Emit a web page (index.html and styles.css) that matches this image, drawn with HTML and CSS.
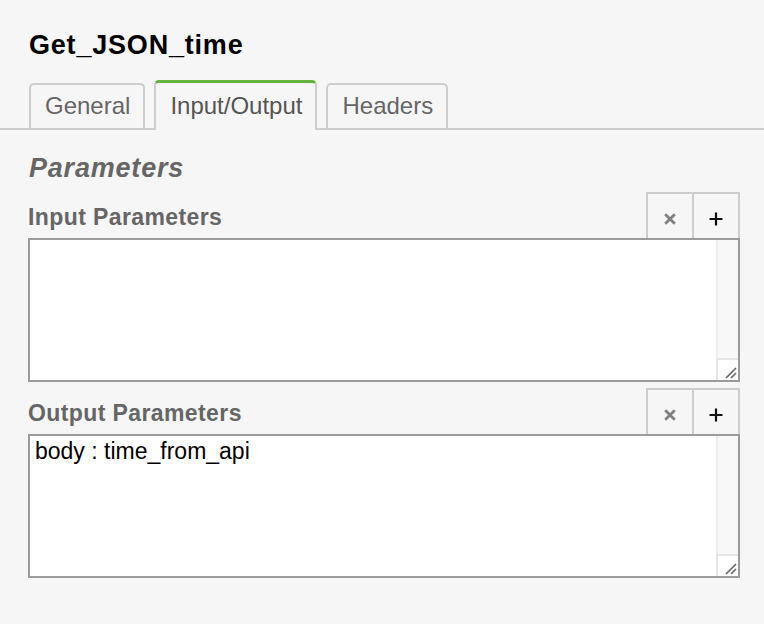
FILE: index.html
```html
<!DOCTYPE html>
<html>
<head>
<meta charset="utf-8">
<link rel="stylesheet" href="styles.css">
</head>
<body>
<div class="panel">
  <h1 class="title">Get_JSON_time</h1>
  <div class="tabs">
    <div class="tab">General</div>
    <div class="tab active">Input/Output</div>
    <div class="tab">Headers</div>
  </div>
  <div class="content">
    <h2 class="group-title">Parameters</h2>

    <div class="param">
      <div class="param-head">
        <label class="param-label">Input Parameters</label>
        <div class="btns">
          <button class="btn btn-clear" aria-label="clear">
            <svg width="12" height="12" viewBox="0 0 12 12"><path d="M1.2 1.2L10.8 10.8M10.8 1.2L1.2 10.8" stroke="#808080" stroke-width="2.8" fill="none"/></svg>
          </button>
          <button class="btn btn-add" aria-label="add">
            <svg width="14" height="14" viewBox="0 0 14 14"><path d="M7 0.5V13.5M0.5 7H13.5" stroke="#111" stroke-width="2.2" fill="none"/></svg>
          </button>
        </div>
      </div>
      <div class="field">
        <textarea class="area"></textarea>
        <div class="scroll">
          <div class="track"></div>
          <div class="corner">
            <svg width="20" height="20" viewBox="0 0 20 20"><path d="M8 18L18 8M13 18L18 13" stroke="#666" stroke-width="1.6" fill="none"/></svg>
          </div>
        </div>
      </div>
    </div>

    <div class="param">
      <div class="param-head">
        <label class="param-label">Output Parameters</label>
        <div class="btns">
          <button class="btn btn-clear" aria-label="clear">
            <svg width="12" height="12" viewBox="0 0 12 12"><path d="M1.2 1.2L10.8 10.8M10.8 1.2L1.2 10.8" stroke="#808080" stroke-width="2.8" fill="none"/></svg>
          </button>
          <button class="btn btn-add" aria-label="add">
            <svg width="14" height="14" viewBox="0 0 14 14"><path d="M7 0.5V13.5M0.5 7H13.5" stroke="#111" stroke-width="2.2" fill="none"/></svg>
          </button>
        </div>
      </div>
      <div class="field">
        <textarea class="area">body : time_from_api</textarea>
        <div class="scroll">
          <div class="track"></div>
          <div class="corner">
            <svg width="20" height="20" viewBox="0 0 20 20"><path d="M8 18L18 8M13 18L18 13" stroke="#666" stroke-width="1.6" fill="none"/></svg>
          </div>
        </div>
      </div>
    </div>
  </div>
</div>
</body>
</html>
```
FILE: styles.css
```css
html, body {
  margin: 0;
  padding: 0;
  background: #f6f6f6;
}
body {
  font-family: "Liberation Sans", Arial, sans-serif;
  color: #000;
  width: 764px;
  height: 624px;
  overflow: hidden;
}
.title {
  margin: 0;
  padding: 30px 0 0 29px;
  height: 50px;
  font-size: 27px;
  line-height: 30px;
  font-weight: bold;
  letter-spacing: 0.8px;
  color: #000;
}
.tabs {
  display: flex;
  align-items: flex-end;
  gap: 9px;
  padding-left: 29px;
  border-bottom: 2px solid #cdcdcd;
  height: 48px;
}
.tab {
  border: 2px solid #cdcdcd;
  border-bottom: 0;
  border-radius: 5px 5px 0 0;
  padding: 1px 13px 2px 14px;
  font-size: 24px;
  line-height: 40px;
  color: #666;
  background: #f6f6f6;
}
.tab.active {
  border-top: 3px solid #62b23b;
  padding-top: 3px;
  padding-bottom: 4px;
  margin-bottom: -2px;
  color: #555;
}
.content {
  padding: 23px 24px 0 28px;
}
.group-title {
  margin: 0 0 9px 1px;
  font-size: 27px;
  line-height: 30px;
  font-weight: bold;
  font-style: italic;
  letter-spacing: 0.8px;
  color: #666;
}
.param {
  margin-bottom: 6px;
}
.param-head {
  display: flex;
  justify-content: space-between;
  align-items: flex-start;
  height: 46px;
}
.param-label {
  font-size: 23px;
  font-weight: bold;
  letter-spacing: 0.4px;
  line-height: 42px;
  padding-top: 4px;
  color: #666;
}
.btns {
  display: flex;
}
.btn {
  box-sizing: border-box;
  width: 46px;
  height: 46px;
  margin: 0;
  padding: 5px 0 0;
  border: 2px solid #cdcdcd;
  border-right: 0;
  border-bottom: 0;
  background: #f6f6f6;
  display: flex;
  align-items: center;
  justify-content: center;
}
.btn-add {
  width: 48px;
  border-right: 2px solid #cdcdcd;
}
.field {
  display: flex;
  height: 140px;
  border: 2px solid #9b9b9b;
  background: #fff;
}
.area {
  flex: 1;
  margin: 0;
  border: 0;
  outline: 0;
  resize: none;
  overflow: hidden;
  padding: 1px 5px;
  font-family: "Liberation Sans", Arial, sans-serif;
  font-size: 23px;
  line-height: 28px;
  color: #000;
  background: #fff;
}
.scroll {
  width: 22px;
  display: flex;
  flex-direction: column;
}
.track {
  flex: 1;
  background: #f8f8f8;
  border-left: 2px solid #ececec;
}
.corner {
  height: 22px;
  box-sizing: border-box;
  border-top: 2px solid #e6e6e6;
  border-left: 2px solid #e6e6e6;
  background: #fff;
  display: flex;
  align-items: flex-end;
  justify-content: flex-end;
}
.corner svg {
  display: block;
}
```
